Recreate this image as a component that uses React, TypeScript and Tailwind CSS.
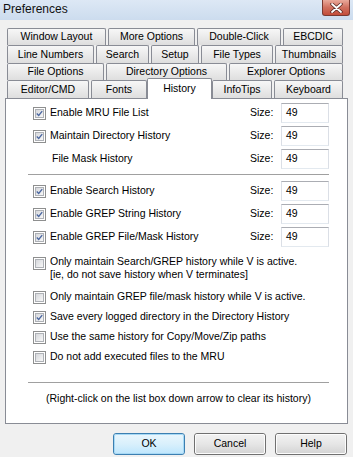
import React from "react";

function Check({ checked }: { checked: boolean }) {
  return (
    <div className="w-[13px] h-[13px] shrink-0 border border-[#8e8f8f] bg-white p-[1px]">
      <div className="w-full h-full border border-[#aeb1b6] bg-gradient-to-br from-[#d6d8dc] to-[#f7f7f7] flex items-center justify-center">
        {checked && (
          <svg width="9" height="9" viewBox="0 0 9 9">
            <path d="M1 4.5 L3.5 7 L8 1.5" fill="none" stroke="#4a66a0" strokeWidth="1.7" />
          </svg>
        )}
      </div>
    </div>
  );
}

function SizeBox() {
  return (
    <>
      <span className="w-[31px] shrink-0">Size:</span>
      <div className="w-[48px] h-[20px] shrink-0 border border-[#abadb3] border-l-[#dbdfe6] border-r-[#dbdfe6] border-b-[#e3e9ef] bg-white pl-[4px] pt-[1px] leading-[14px]">
        49
      </div>
    </>
  );
}

function SizeRow({ label, checked, plain }: { label: string; checked?: boolean; plain?: boolean }) {
  return (
    <div className="h-[20px] flex items-center">
      <div className="flex-1 flex items-center gap-[4px]">
        {plain ? <span className="pl-[19px]">{label}</span> : <><Check checked={!!checked} /><span>{label}</span></>}
      </div>
      <SizeBox />
    </div>
  );
}

function OptRow({ label, checked }: { label: string; checked: boolean }) {
  return (
    <div className="h-[20px] flex items-center gap-[4px]">
      <Check checked={checked} />
      <span>{label}</span>
    </div>
  );
}

function Tab({ label, w, grow }: { label: string; w?: string; grow?: boolean }) {
  return (
    <div
      className={
        "h-full flex items-center justify-center border border-b-0 border-[#898c95] rounded-t-[2px] bg-gradient-to-b from-[#f7f7f7] to-[#dedede] whitespace-nowrap " +
        (grow ? "flex-1" : "shrink-0") +
        " " +
        (w ?? "")
      }
    >
      {label}
    </div>
  );
}

function Btn({ label, def }: { label: string; def?: boolean }) {
  return (
    <div
      className={
        "w-[72px] h-[22px] rounded-[3px] border flex items-center justify-center " +
        (def
          ? "border-[#3c7fb1] bg-gradient-to-b from-[#eaf6fd] via-[#d9f0fc] to-[#bee6fd]"
          : "border-[#707070] bg-gradient-to-b from-[#f2f2f2] via-[#e6e6e6] to-[#d3d3d3]")
      }
    >
      <div className={"w-full h-full rounded-[2px] border flex items-center justify-center " + (def ? "border-[#a7d9f5]" : "border-[#fcfcfc]")}>
        {label}
      </div>
    </div>
  );
}

export default function App() {
  return (
    <div className="w-[353px] h-[457px] bg-[#f0f0f0] flex flex-col font-['Liberation_Sans',Arial,sans-serif] text-[10.5px] text-black overflow-hidden">
      {/* title bar */}
      <div className="h-[20px] flex items-start justify-between bg-gradient-to-b from-[#dde8f5] to-[#ccdcee] pl-[3px] pr-[3px] shrink-0">
        <span className="text-[12px] leading-[16px] mt-[1px] text-[#111]">Preferences</span>
        <div className="w-[28px] h-[16px] rounded-b-[3px] border border-t-0 border-[#7a3a32] bg-gradient-to-b from-[#e9a99b] via-[#d0705f] to-[#c34d3a] flex items-center justify-center">
          <svg width="13" height="10" viewBox="0 0 13 10">
            <path d="M2 1 L11 9 M11 1 L2 9" stroke="#5a2a24" strokeWidth="3.4" strokeLinecap="round" />
            <path d="M2 1 L11 9 M11 1 L2 9" stroke="#ffffff" strokeWidth="1.8" strokeLinecap="round" />
          </svg>
        </div>
      </div>

      {/* tabs */}
      <div className="mt-[8px] ml-[7px] mr-[10px] flex flex-col shrink-0">
        <div className="h-[17px] flex gap-[2px]">
          <Tab label="Window Layout" w="w-[99px]" />
          <Tab label="More Options" w="w-[87px]" />
          <Tab label="Double-Click" w="w-[84px]" />
          <Tab label="EBCDIC" grow />
        </div>
        <div className="h-[18px] flex gap-[2px]">
          <Tab label="Line Numbers" w="w-[87px]" />
          <Tab label="Search" w="w-[53px]" />
          <Tab label="Setup" w="w-[48px]" />
          <Tab label="File Types" w="w-[72px]" />
          <Tab label="Thumbnails" grow />
        </div>
        <div className="h-[17px] flex gap-[2px]">
          <Tab label="File Options" w="w-[97px]" />
          <Tab label="Directory Options" w="w-[121px]" />
          <Tab label="Explorer Options" grow />
        </div>
        <div className="h-[18px] flex gap-[2px]">
          <Tab label="Editor/CMD" w="w-[82px]" />
          <Tab label="Fonts" w="w-[56px]" />
          <div className="relative z-10 -mt-[2px] -mx-[2px] h-[21px] w-[65px] shrink-0 flex justify-center pt-[2px] border border-b-0 border-[#898c95] rounded-t-[2px] bg-white">
            History
          </div>
          <Tab label="InfoTips" w="w-[60px]" />
          <Tab label="Keyboard" grow />
        </div>
      </div>

      {/* panel */}
      <div className="mx-[5px] h-[326px] shrink-0 border border-[#898c95] bg-white flex flex-col pt-[4px] pl-[27px] pr-[18px]">
        <div className="flex flex-col gap-[3px]">
          <SizeRow label="Enable MRU File List" checked />
          <SizeRow label="Maintain Directory History" checked />
          <SizeRow label="File Mask History" plain />
        </div>
        <div className="mt-[5px] -ml-[5px] h-px bg-[#a0a0a0]" />
        <div className="mt-[6px] flex flex-col gap-[3px]">
          <SizeRow label="Enable Search History" checked />
          <SizeRow label="Enable GREP String History" checked />
          <SizeRow label="Enable GREP File/Mask History" checked />
        </div>
        <div className="mt-[8px] flex gap-[4px] leading-[13px]">
          <div className="mt-[2px]"><Check checked={false} /></div>
          <div>
            <div>Only maintain Search/GREP history while V is active.</div>
            <div>[ie, do not save history when V terminates]</div>
          </div>
        </div>
        <div className="mt-[6px] flex flex-col">
          <OptRow label="Only maintain GREP file/mask history while V is active." checked={false} />
          <OptRow label="Save every logged directory in the Directory History" checked />
          <OptRow label="Use the same history for Copy/Move/Zip paths" checked={false} />
          <OptRow label="Do not add executed files to the MRU" checked={false} />
        </div>
        <div className="mt-[15px] -ml-[5px] h-px bg-[#a0a0a0]" />
        <div className="mt-[8px] -ml-[5px] text-center leading-[14px]">
          (Right-click on the list box down arrow to clear its history)
        </div>
      </div>

      {/* buttons */}
      <div className="mt-[9px] flex justify-end gap-[9px] pr-[6px]">
        <Btn label="OK" def />
        <Btn label="Cancel" />
        <Btn label="Help" />
      </div>
    </div>
  );
}
